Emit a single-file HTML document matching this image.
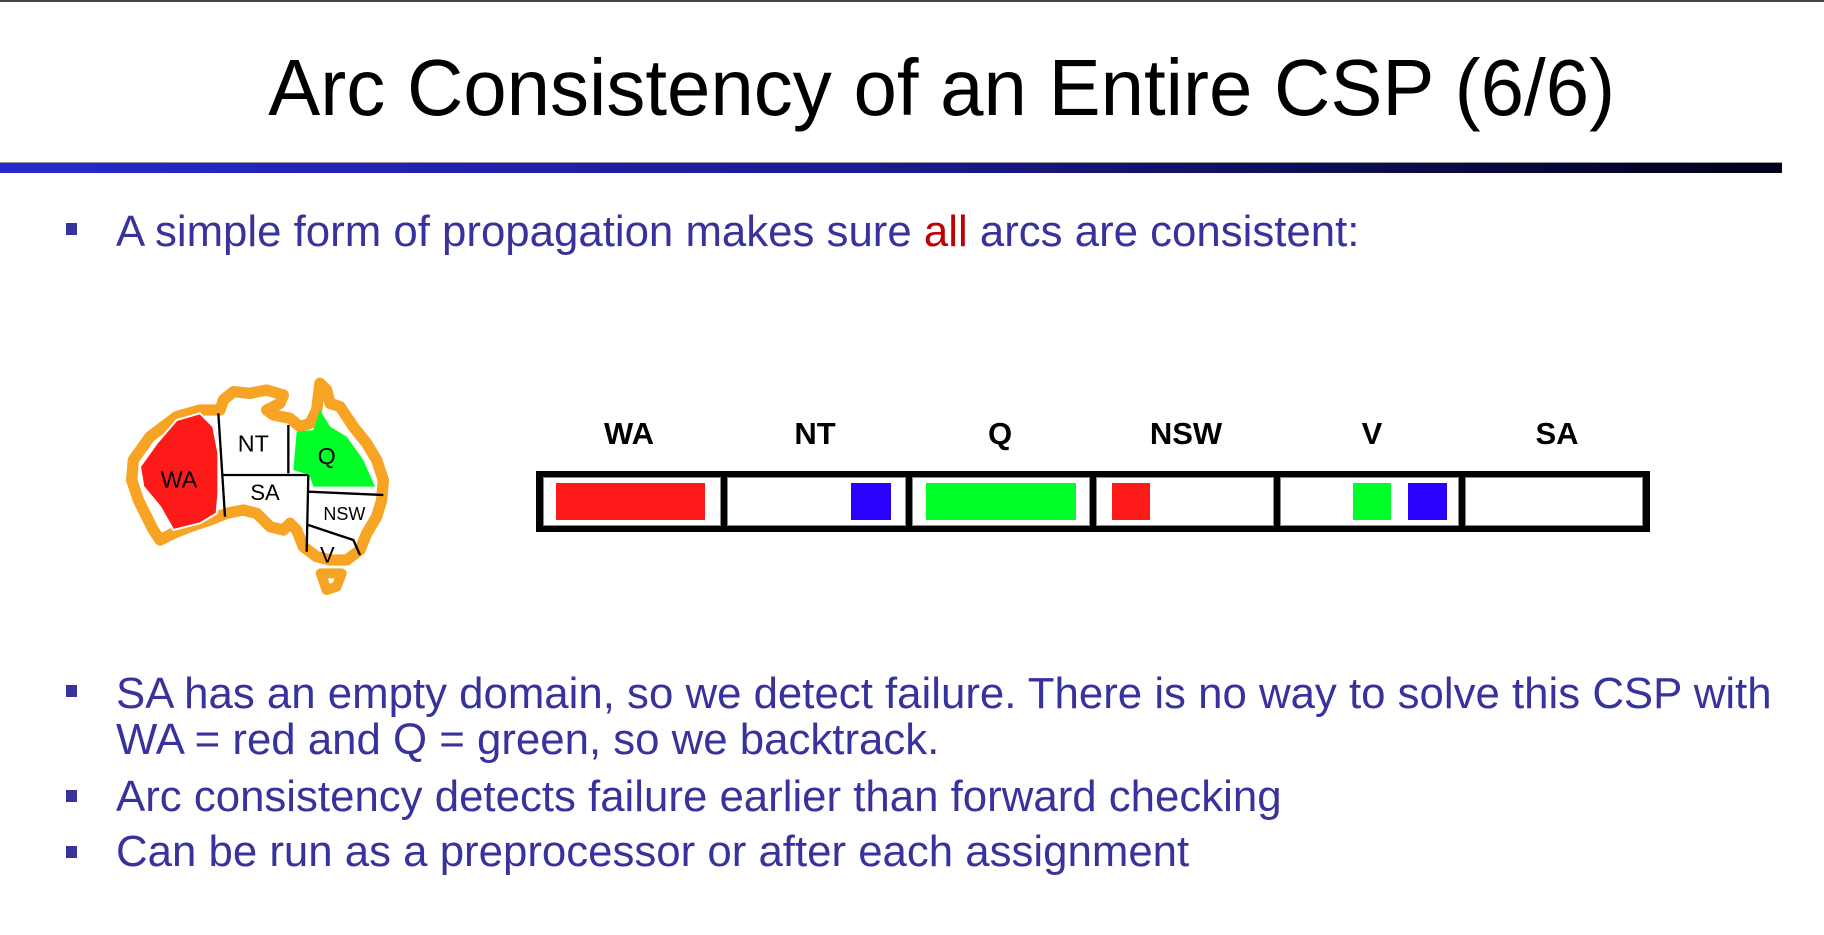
<!DOCTYPE html>
<html><head><meta charset="utf-8"><style>
*{margin:0;padding:0}
body{width:1824px;height:935px;background:#fff;position:relative;overflow:hidden;font-family:"Liberation Sans",sans-serif}
.topline{position:absolute;left:0;top:0;width:1824px;height:2px;background:#444}
.title{position:absolute;left:0;width:1884px;top:42px;text-align:center;font-size:80px;color:#000;white-space:nowrap}
.title span{display:inline-block;transform:scaleX(0.975)}
.bar{position:absolute;left:0;top:162px;width:1782px;height:10px;background:linear-gradient(90deg,#2828d0,#1a1a90 50%,#000018);border-top:1px solid #999}
.t{position:absolute;left:116px;font-size:44px;color:#38329c;white-space:nowrap;transform-origin:left top;transform:scaleX(0.995)}
.sq{position:absolute;left:66px;width:11px;height:12px;background:#38329c}
.lab{position:absolute;top:416px;font-weight:bold;font-size:31px;width:186px;text-align:center;color:#000}
.box{position:absolute;top:471px;left:536px;width:1114px;height:61px;border:4px solid #000;box-sizing:border-box;display:flex;background:#000}
.cell{flex:1;background:#fff;margin:2px 3px;border:1px solid #888;position:relative}
.r{position:absolute;top:8px;height:37px}
</style></head><body>
<div class="topline"></div>
<div class="title"><span>Arc Consistency of an Entire CSP (6/6)</span></div>
<div class="bar"></div>
<div class="sq" style="top:223px"></div>
<div class="t" style="top:207px">A simple form of propagation makes sure <span style="color:#c00000">all</span> arcs are consistent:</div>

<svg style="position:absolute;left:100px;top:360px" width="320" height="250" viewBox="0 0 960 750">
<path d="M100,300 L150,230 230,170 300,150 360,150 370,120 400,95 450,100 500,90 550,105 540,130 500,150 520,165 570,175 600,200 630,190 650,150 660,70 680,90 690,130 720,140 760,200 800,250 830,300 850,360 845,420 830,470 800,520 780,570 740,600 690,600 650,590 610,560 590,510 570,490 550,510 510,500 470,460 430,450 380,460 330,480 270,500 220,520 180,540 160,510 140,470 115,420 95,360 Z" fill="#fff" stroke="#f7a425" stroke-width="34" stroke-linejoin="round"/>
<path d="M662,640 L725,640 710,680 680,690 Z" fill="#fff" stroke="#f7a425" stroke-width="30" stroke-linejoin="round"/>
<path d="M120,320 L170,250 230,180 300,160 340,200 355,280 355,400 350,460 300,490 220,510 180,440 130,380 Z" fill="#ff1a1a" stroke="#fff" stroke-width="6" stroke-linejoin="round"/>
<path d="M590,215 L640,210 660,150 690,200 740,230 790,300 825,380 640,380 628,345 580,330 Z" fill="#00ff28" stroke-linejoin="round"/>
<g stroke="#000" stroke-width="7" fill="none">
<path d="M355,160 L375,470"/><path d="M370,345 L625,345"/><path d="M565,195 L565,340"/><path d="M625,345 L620,575"/><path d="M625,395 L850,405"/><path d="M625,495 L700,520 760,540 780,585"/>
</g>
<g font-family="Liberation Sans,sans-serif" fill="#000" text-anchor="middle">
<text x="460" y="275" font-size="70">NT</text>
<text x="680" y="312" font-size="70">Q</text>
<text x="237" y="383" font-size="70">WA</text>
<text x="495" y="420" font-size="66">SA</text>
<text x="733" y="480" font-size="54">NSW</text>
<text x="682" y="607" font-size="66">V</text>
</g>
</svg>

<div class="lab" style="left:536px">WA</div>
<div class="lab" style="left:722px">NT</div>
<div class="lab" style="left:907px">Q</div>
<div class="lab" style="left:1093px">NSW</div>
<div class="lab" style="left:1279px">V</div>
<div class="lab" style="left:1464px">SA</div>
<div class="box">
<div class="cell"></div><div class="cell"></div><div class="cell"></div><div class="cell"></div><div class="cell"></div><div class="cell"></div>
</div>
<div class="r" style="left:556px;top:483px;width:149px;background:#ff1a1a"></div>
<div class="r" style="left:851px;top:483px;width:40px;background:#2a00ff"></div>
<div class="r" style="left:926px;top:483px;width:150px;background:#00ff28"></div>
<div class="r" style="left:1112px;top:483px;width:38px;background:#ff1a1a"></div>
<div class="r" style="left:1353px;top:483px;width:38px;background:#00ff28"></div>
<div class="r" style="left:1408px;top:483px;width:39px;background:#2a00ff"></div>

<div class="sq" style="top:685px"></div>
<div class="t" style="top:669px">SA has an empty domain, so we detect failure. There is no way to solve this CSP with</div>
<div class="t" style="top:715px">WA = red and Q = green, so we backtrack.</div>
<div class="sq" style="top:790px"></div>
<div class="t" style="top:772px">Arc consistency detects failure earlier than forward checking</div>
<div class="sq" style="top:846px"></div>
<div class="t" style="top:827px">Can be run as a preprocessor or after each assignment</div>
</body></html>
